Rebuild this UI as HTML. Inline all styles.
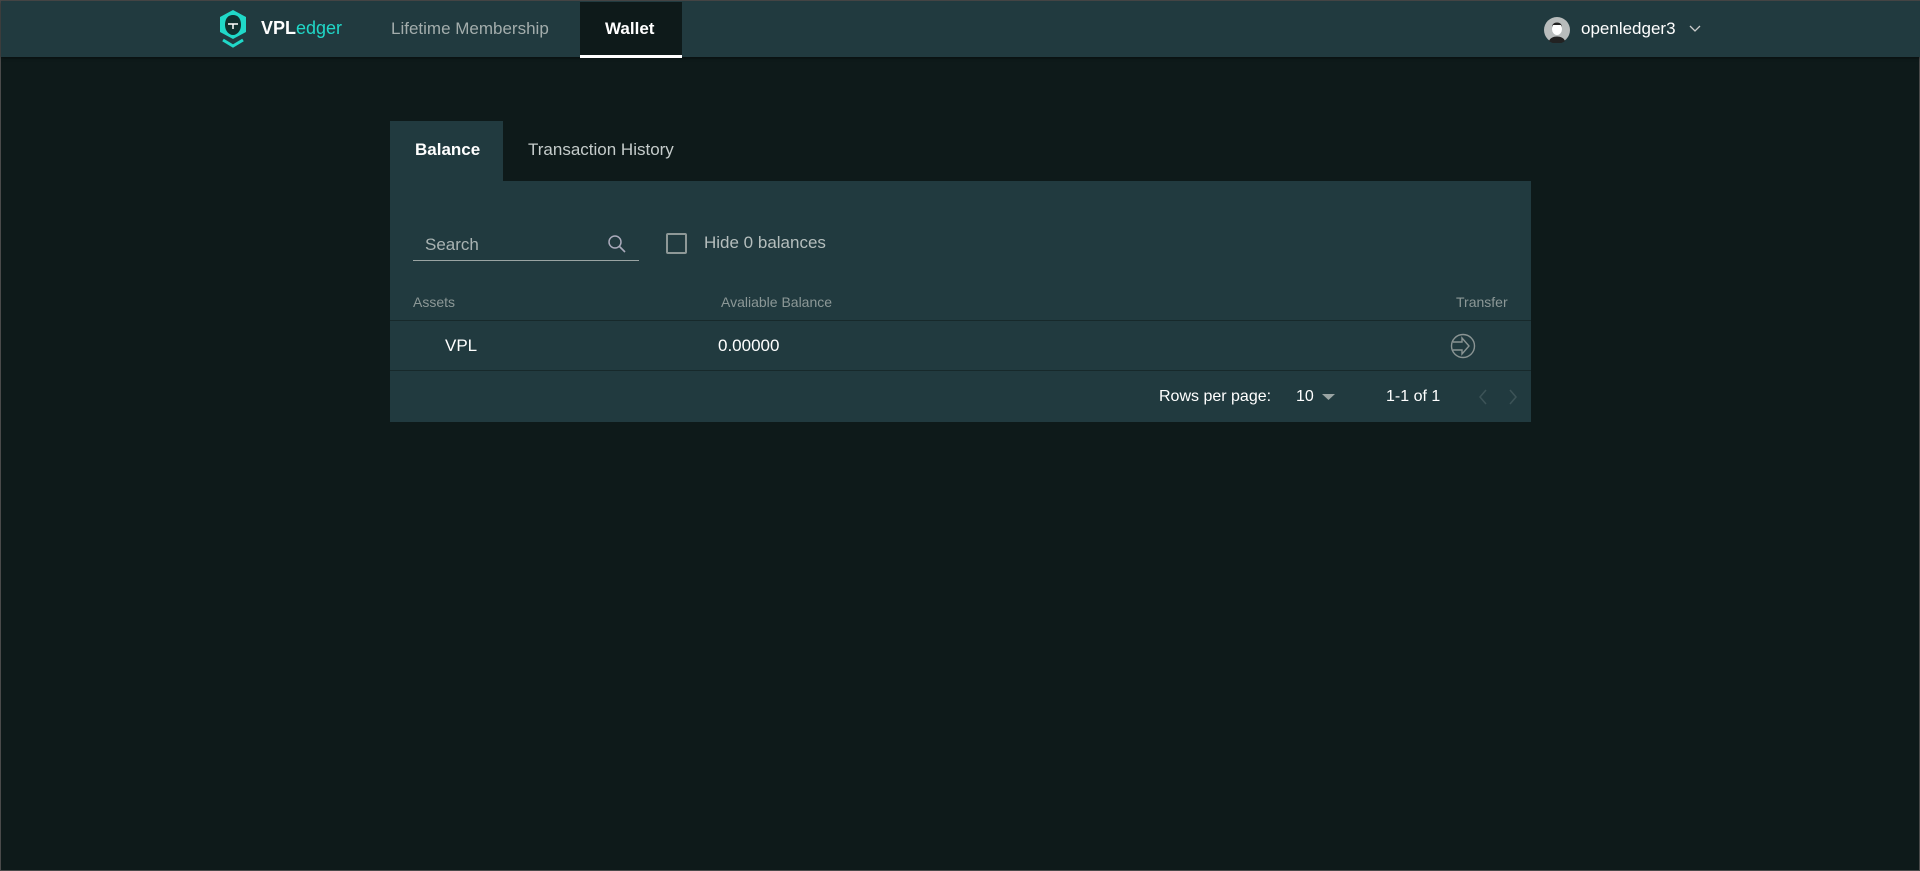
<!DOCTYPE html>
<html><head><meta charset="utf-8"><style>
*{margin:0;padding:0;box-sizing:border-box}
body{width:1920px;height:871px;background:#0e1a1a;font-family:"Liberation Sans",sans-serif;position:relative;overflow:hidden;border:1px solid #4a4a4a}
.abs{position:absolute;white-space:nowrap}
.hdr{position:absolute;left:0;top:0;width:1920px;height:56px;background:#213a3f;box-shadow:0 1px 3px rgba(0,0,0,.5)}
</style></head><body>
<div class="hdr"></div>
<svg class="abs" style="left:217px;top:8px" width="30" height="42" viewBox="0 0 30 42">
<path d="M15 1 L28 8 L28 23 L15 30 L2 23 L2 8 Z" fill="#20d8c8"/>
<path d="M15 6 C21 6 23 11 23 16 C23 22 19 26 15 26 C11 26 7 22 7 16 C7 11 9 6 15 6Z" fill="#10302f"/>
<path d="M10 15 H20 M15 15 V20" stroke="#fff" stroke-width="1.5"/>
<path d="M5 31 L15 37 L25 31" stroke="#20d8c8" stroke-width="3" fill="none"/>
</svg>
<div class="abs" style="left:260px;top:17px;font-size:18px;color:#fff;font-weight:bold">VPL<span style="color:#20d8c8;font-weight:normal">edger</span></div>
<div class="abs" style="left:390px;top:18px;font-size:17px;color:#a3adac">Lifetime Membership</div>
<div class="abs" style="left:579px;top:1px;width:102px;height:56px;background:#0e1a1a;border-bottom:3px solid #fff"></div>
<div class="abs" style="left:604px;top:18px;font-size:17px;color:#fff;font-weight:bold">Wallet</div>
<svg class="abs" style="left:1543px;top:16px" width="26" height="26" viewBox="0 0 26 26"><circle cx="13" cy="13" r="13" fill="#b8bcbc"/><path d="M5 24 C7 18 19 18 21 24 A13 13 0 0 1 5 24Z" fill="#222"/><ellipse cx="13" cy="12" rx="5" ry="6" fill="#fff"/><path d="M8 10 C8 4 18 4 18 10 L17 8 L9 8Z" fill="#222"/></svg>
<div class="abs" style="left:1580px;top:18px;font-size:17px;color:#fff">openledger3</div>
<svg class="abs" style="left:1688px;top:24px" width="12" height="8"><path d="M1 1 L6 6 L11 1" stroke="#ccc" stroke-width="1.3" fill="none"/></svg>

<div class="abs" style="left:389px;top:120px;width:113px;height:61px;background:#213a3f"></div>
<div class="abs" style="left:414px;top:139px;font-size:17px;color:#fff;font-weight:bold">Balance</div>
<div class="abs" style="left:527px;top:139px;font-size:17px;color:#c5cccb">Transaction History</div>
<div class="abs" style="left:389px;top:180px;width:1141px;height:241px;background:#213a3f"></div>
<div class="abs" style="left:412px;top:259px;width:226px;height:1px;background:#9aa4a3"></div>
<div class="abs" style="left:424px;top:234px;font-size:17px;color:#a9b3b2">Search</div>
<svg class="abs" style="left:606px;top:233px" width="20" height="20"><circle cx="8" cy="8" r="6" stroke="#aab" stroke-width="1.5" fill="none"/><path d="M12.5 12.5 L18 18" stroke="#aab" stroke-width="1.6"/></svg>
<div class="abs" style="left:665px;top:232px;width:21px;height:21px;border:2px solid #8e9897;border-radius:2px"></div>
<div class="abs" style="left:703px;top:232px;font-size:17px;color:#b5bebd">Hide 0 balances</div>
<div class="abs" style="left:412px;top:293px;font-size:14px;color:#8c9897">Assets</div>
<div class="abs" style="left:720px;top:293px;font-size:14px;color:#8c9897">Avaliable Balance</div>
<div class="abs" style="left:1455px;top:293px;font-size:14px;color:#8c9897">Transfer</div>
<div class="abs" style="left:389px;top:319px;width:1141px;height:1px;background:#17292b"></div>
<div class="abs" style="left:444px;top:335px;font-size:17px;color:#fff">VPL</div>
<div class="abs" style="left:717px;top:335px;font-size:17px;color:#fff">0.00000</div>
<svg class="abs" style="left:1449px;top:332px" width="26" height="26"><circle cx="13" cy="13" r="11.5" stroke="#8a9493" stroke-width="1.4" fill="none"/><path d="M3 9 H12 V5 L19 13 L12 21 V17 H3" stroke="#8a9493" stroke-width="1.4" fill="none"/></svg>
<div class="abs" style="left:389px;top:369px;width:1141px;height:1px;background:#17292b"></div>
<div class="abs" style="left:1158px;top:387px;font-size:16px;color:#fff">Rows per page:</div>
<div class="abs" style="left:1295px;top:387px;font-size:16px;color:#fff">10</div>
<svg class="abs" style="left:1321px;top:393px" width="14" height="8"><path d="M0 0 H13 L6.5 6Z" fill="#9aa4a3"/></svg>
<div class="abs" style="left:1385px;top:387px;font-size:16px;color:#fff">1-1 of 1</div>
<svg class="abs" style="left:1477px;top:388px" width="40" height="16"><path d="M8 1 L2 8 L8 15 M32 1 L38 8 L32 15" stroke="#3c5357" stroke-width="1.5" fill="none"/></svg>
</body></html>
